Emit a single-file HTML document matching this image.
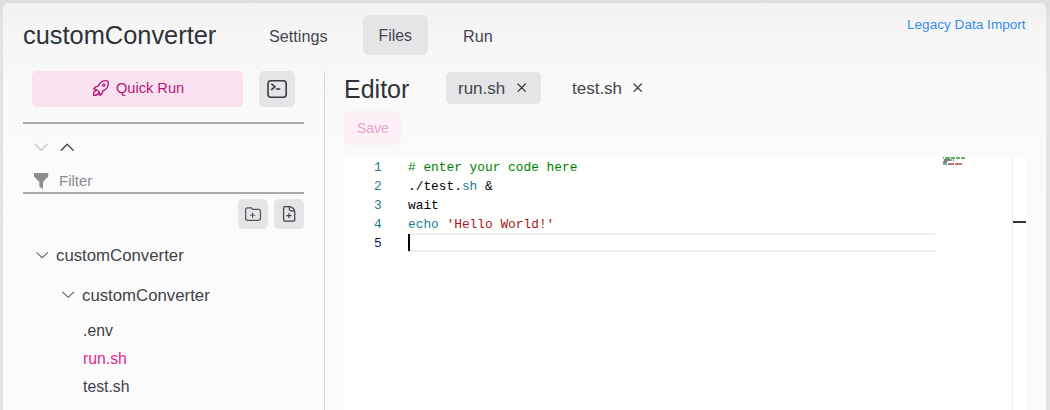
<!DOCTYPE html>
<html><head><meta charset="utf-8">
<style>
*{box-sizing:border-box;margin:0;padding:0}
html,body{width:1050px;height:410px;overflow:hidden;background:linear-gradient(to bottom,#dedee0,#e3e3e6 20px,#e4e4e7);font-family:"Liberation Sans",sans-serif;}
.card{position:absolute;left:3px;top:3px;width:1043px;height:420px;border-radius:5px;background:linear-gradient(to bottom,#f1f1f1 0px,#f6f6f7 30px,#f9f9fa 80px,#fafafb 120px,#fbfbfc 300px)}
.abs{position:absolute;white-space:nowrap}
.title{left:23px;top:21px;font-size:25.4px;color:#2f3337}
.nav{font-size:16.2px;color:#43464b}
.navbtn{position:absolute;left:363px;top:15px;width:65px;height:40px;background:#e5e5e8;border-radius:6px}
.legacy{left:907px;top:17px;font-size:13.6px;color:#3a8ce6}
.qr{position:absolute;left:32px;top:71px;width:211px;height:36px;background:#f9e1ef;border-radius:5px}
.qrtxt{left:116px;top:80px;font-size:14.6px;color:#b3167a}
.term{position:absolute;left:259px;top:71px;width:36px;height:36px;background:#e5e5e8;border-radius:5px}
.hline{position:absolute;left:23px;width:281px;height:2px;background:#a8a8ae}
.ibtn{position:absolute;top:199px;width:30px;height:30px;background:#e5e5e8;border-radius:5px}
.vdiv{position:absolute;left:324px;top:71px;width:1px;height:340px;background:#d9d9dc}
.tree{font-size:16.8px;color:#3f4347}
.file{font-size:15.8px;color:#3f4347}
.editor{position:absolute;left:344px;top:157px;width:669px;height:260px;background:#fffffe}
.ruler{position:absolute;left:1012px;top:157px;width:14px;height:260px;background:#fff;border-left:1px solid #ebebeb}
.code{font-family:"Liberation Mono",monospace;font-size:12.83px;line-height:19px}
.ln{color:#237893}
svg{position:absolute;overflow:visible}
</style></head><body>
<div class="card"></div>
<!-- header -->
<div class="abs title">customConverter</div>
<div class="navbtn"></div>
<div class="abs nav" style="left:269px;top:26.5px">Settings</div>
<div class="abs nav" style="left:378.5px;top:26.5px;font-size:15.8px">Files</div>
<div class="abs nav" style="left:463px;top:26.5px">Run</div>
<div class="abs legacy">Legacy Data Import</div>

<!-- sidebar -->
<div class="qr"></div>
<svg style="left:89.6px;top:77.3px" width="22" height="22" viewBox="0 0 24 24" fill="none" stroke="#b3167a" stroke-width="1.5" stroke-linecap="round" stroke-linejoin="round"><path d="M4 13a8 8 0 0 1 7 7a6 6 0 0 0 3 -5a9 9 0 0 0 6 -8q0.3 -3.3 -3 -3a9 9 0 0 0 -8 6a6 6 0 0 0 -5 3"/><path d="M7 14a6 6 0 0 0 -3 6a6 6 0 0 0 6 -3"/><circle cx="15" cy="9" r="1.3" stroke-width="1.3"/></svg>
<div class="abs qrtxt">Quick Run</div>
<div class="term"></div>
<svg style="left:262px;top:74px" width="30" height="30" viewBox="0 0 30 30" fill="none" stroke="#3a3b40" stroke-width="1.6" stroke-linecap="round" stroke-linejoin="round"><rect x="6" y="6.7" width="18.2" height="16.6" rx="3"/><path d="M9.7 10.2l3.3 2.6l-3.3 2.6"/><path d="M14.5 15h3.2" stroke-width="1.5"/></svg>
<div class="hline" style="top:122px"></div>
<svg style="left:30px;top:140px" width="50" height="14" viewBox="0 0 50 14" fill="none" stroke-width="1.5" stroke-linecap="round" stroke-linejoin="round"><path d="M5.2 4.2l6 6l6 -6" stroke="#c9c9cc"/><path d="M31.2 10.2l6 -6l6 6" stroke="#4d4f53"/></svg>
<svg style="left:34px;top:173px" width="15" height="16" viewBox="0 0 15 16"><path d="M0 0h14.2v3.6L9 9v7l-3.6-2.2V9L0 3.6z" fill="#8b8c90"/></svg>
<div class="abs" style="left:59px;top:172px;font-size:15px;color:#8b8c90">Filter</div>
<div class="hline" style="top:192px"></div>
<div class="ibtn" style="left:238px"></div>
<div class="ibtn" style="left:274px"></div>
<svg style="left:238px;top:199px" width="30" height="30" viewBox="0 0 30 30" fill="none" stroke="#55575b" stroke-width="1.25" stroke-linecap="round" stroke-linejoin="round"><path d="M7.6 10.8a2 2 0 0 1 2 -2h3.6l1.6 1.6h5.7a2 2 0 0 1 2 2v6.9a2 2 0 0 1 -2 2h-10.9a2 2 0 0 1 -2 -2z"/><path d="M14.6 14.1v4.2M12.5 16.2h4.2" stroke-width="1.15"/></svg>
<svg style="left:274px;top:199px" width="30" height="30" viewBox="0 0 30 30" fill="none" stroke="#3f4044" stroke-width="1.25" stroke-linecap="round" stroke-linejoin="round"><path d="M10.6 7.6h4.6a5.5 5.5 0 0 1 5.5 5.5v7.9a1 1 0 0 1 -1 1h-9.1a1 1 0 0 1 -1 -1v-12.4a1 1 0 0 1 1 -1z"/><path d="M15.4 7.8v2.4a1.6 1.6 0 0 0 1.6 1.6h3.2"/><path d="M14.9 14.5v4.2M12.8 16.6h4.2" stroke-width="1.15"/></svg>
<svg style="left:30px;top:245px" width="60" height="60" viewBox="0 0 60 60" fill="none" stroke="#75777b" stroke-width="1.3" stroke-linecap="round" stroke-linejoin="round"><path d="M6.8 7.6l5.4 5.2l5.4 -5.2"/><path d="M32.8 47.2l5.4 5.2l5.4 -5.2"/></svg>
<div class="abs tree" style="left:56px;top:246px">customConverter</div>
<div class="abs tree" style="left:82px;top:286px">customConverter</div>
<div class="abs file" style="left:83px;top:321.5px">.env</div>
<div class="abs file" style="left:83px;top:349.5px;color:#e0288f">run.sh</div>
<div class="abs file" style="left:83px;top:378px">test.sh</div>
<div class="vdiv"></div>

<!-- editor -->
<div class="abs" style="left:344px;top:75px;font-size:25px;color:#2f3337">Editor</div>
<div class="abs" style="left:446px;top:72px;width:95px;height:32px;background:#e5e5e8;border-radius:5px"></div>
<div class="abs nav" style="left:458px;top:79px;font-size:17px">run.sh</div>
<div class="abs nav" style="left:572px;top:79px;font-size:17px">test.sh</div>
<svg style="left:510px;top:80px" width="140" height="16" viewBox="0 0 140 16" fill="none" stroke="#3a3b3f" stroke-width="1.3" stroke-linecap="round"><path d="M8 4l7.4 7.4M15.4 4l-7.4 7.4"/><path d="M124 4l7.4 7.4M131.4 4l-7.4 7.4"/></svg>
<div class="abs" style="left:344px;top:111px;width:57px;height:34px;background:#fcf0f6;border-radius:5px"></div>
<div class="abs" style="left:357px;top:120px;font-size:14px;color:#e6a6cb">Save</div>
<div class="editor"></div>
<div class="ruler"></div>
<div class="abs" style="left:1013px;top:221px;width:13px;height:2px;background:#333"></div>
<div class="abs" style="left:408px;top:233px;width:527px;height:19px;border:2px solid #eeeeee;border-left:none;border-right:none"></div>
<div class="abs" style="left:408px;top:234px;width:2px;height:17px;background:#000"></div>
<div class="abs code ln" style="left:374px;top:158px">1<br>2<br>3<br>4<br><span style="color:#0b216f">5</span></div>
<div class="abs code" style="left:408px;top:158px;color:#000"><span style="color:#008000"># enter your code here</span><br>./test.<span style="color:#1b7f8b">sh</span> &amp;<br>wait<br><span style="color:#1b7f8b">echo</span> <span style="color:#a31515">'Hello World!'</span><br>&nbsp;</div>
<!-- minimap -->
<div class="abs" style="left:943px;top:157px;width:1px;height:2px;background:rgba(0,128,0,0.6)"></div><div class="abs" style="left:945px;top:157px;width:5px;height:2px;background:rgba(0,128,0,0.6)"></div><div class="abs" style="left:951px;top:157px;width:4px;height:2px;background:rgba(0,128,0,0.6)"></div><div class="abs" style="left:956px;top:157px;width:4px;height:2px;background:rgba(0,128,0,0.6)"></div><div class="abs" style="left:961px;top:157px;width:4px;height:2px;background:rgba(0,128,0,0.6)"></div><div class="abs" style="left:944px;top:159px;width:6px;height:2px;background:rgba(0,0,0,0.5)"></div><div class="abs" style="left:950px;top:159px;width:2px;height:2px;background:rgba(27,127,139,0.6)"></div><div class="abs" style="left:953px;top:159px;width:1px;height:2px;background:rgba(0,0,0,0.5)"></div><div class="abs" style="left:943px;top:161px;width:4px;height:2px;background:rgba(0,0,0,0.5)"></div><div class="abs" style="left:943px;top:163px;width:4px;height:2px;background:rgba(27,127,139,0.6)"></div><div class="abs" style="left:948px;top:163px;width:6px;height:2px;background:rgba(163,21,21,0.6)"></div><div class="abs" style="left:955px;top:163px;width:7px;height:2px;background:rgba(163,21,21,0.6)"></div>
</body></html>
